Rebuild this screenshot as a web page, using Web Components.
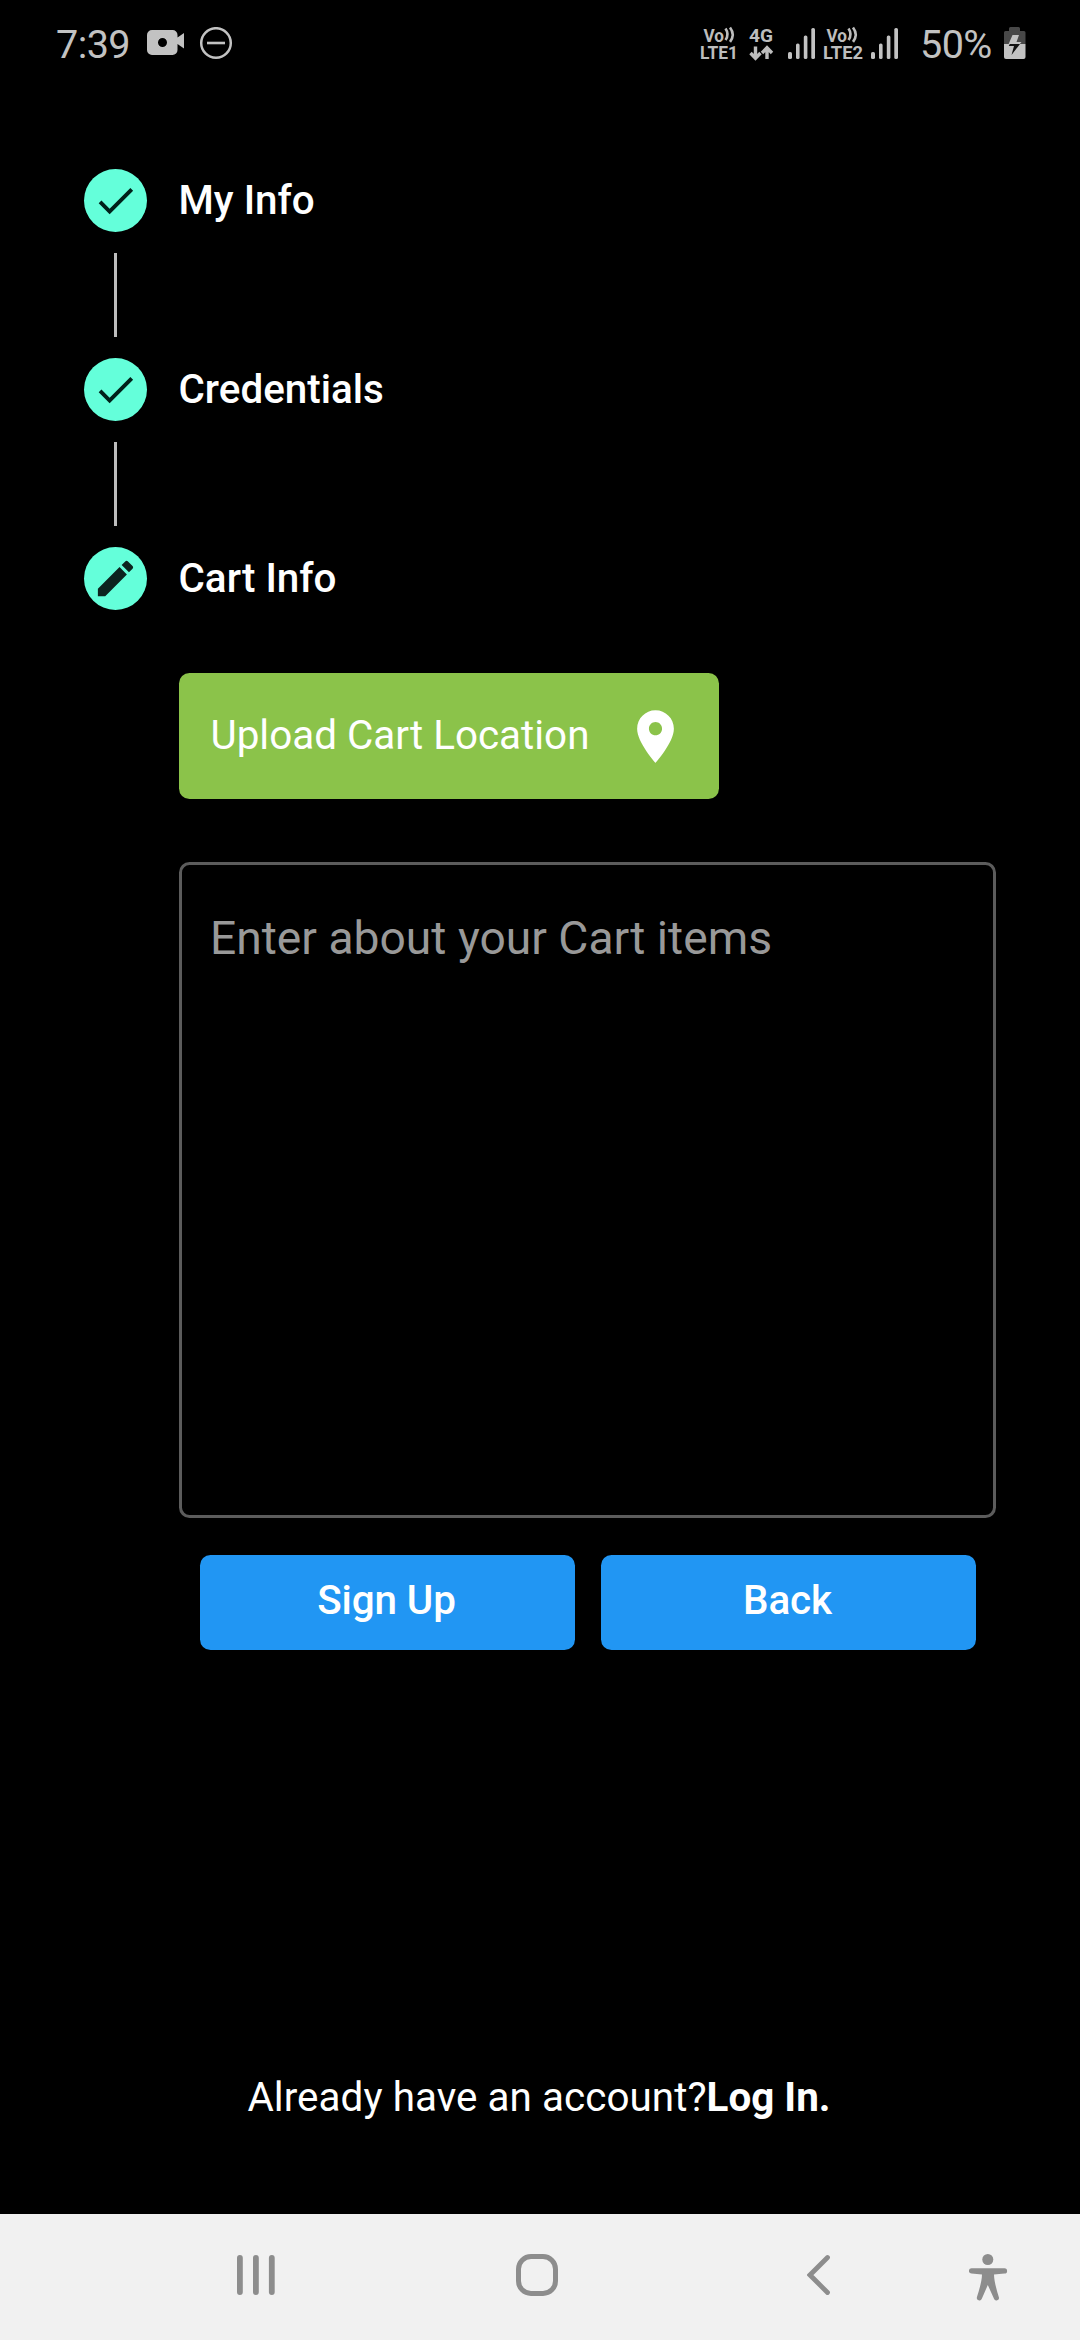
<!DOCTYPE html>
<html lang="en"><head><meta charset="utf-8"><title>Sign Up</title>
<style>
html,body{margin:0;background:#000}
body{font-family:Roboto,"Liberation Sans",sans-serif;color:#fff}
</style></head>
<body>
<signup-screen></signup-screen>
<script>
const define=(name,css,html,connect)=>customElements.define(name,class extends HTMLElement{
  constructor(){super();this.attachShadow({mode:'open'}).innerHTML=`<style>${css}</style>${html}`;}
  connectedCallback(){if(connect)connect(this);}
});

define('signal-bars',':host{display:block;width:27px;height:31px}svg{display:block}',
`<svg width="27" height="31" fill="#c2c2c2"><rect x="0" y="24" width="4" height="7" rx="1.6"/><rect x="8" y="15.5" width="3.6" height="15.5" rx="1.6"/><rect x="15.8" y="7.5" width="3.6" height="23.5" rx="1.6"/><rect x="23.3" y="0" width="3.7" height="31" rx="1.6"/></svg>`);

define('volte-badge',`:host{display:block;width:42px;height:34px}svg{display:block;overflow:visible}
text{font:700 18.5px Roboto,sans-serif;fill:#bdbdbd}`,
`<svg width="42" height="34"><text x="3.500" y="14.5" textLength="20.500" lengthAdjust="spacingAndGlyphs">Vo</text>
<path d="M25.500 1.500q4 5.800 0 11.600M30 .500q5.500 7.200 0 14.400" fill="none" stroke="#bdbdbd" stroke-width="2.600"/>
<text class="l" x="0" y="31.500" lengthAdjust="spacingAndGlyphs"></text></svg>`,
el=>{const t=el.shadowRoot.querySelector('.l');t.textContent=el.getAttribute('label');t.setAttribute('textLength',el.getAttribute('fit'));});

define('status-bar',`:host{display:flex;height:84px;box-sizing:border-box;padding:27px 54px 0 56px;align-items:flex-start;color:#c2c2c2}
.t{font-size:39.600px;letter-spacing:-.6px;line-height:34px;height:34px;margin-top:1px;white-space:nowrap}
svg{display:block;flex:none}.sp{flex:1}
text{font:700 19px Roboto,sans-serif;fill:#bdbdbd}`,
`<span class="t" style="width:91px">7:39</span>
<svg width="38" height="34"><path fill="#c2c2c2" fill-rule="evenodd" d="M5 3H25.500a5 5 0 0 1 5 5V10.500L37 6V21.500L30.500 17V23a5 5 0 0 1-5 5H5a5 5 0 0 1-5-5V8a5 5 0 0 1 5-5ZM15.500 11a4.500 4.500 0 1 0 0 9a4.500 4.500 0 1 0 0-9Z"/></svg>
<svg width="34" height="34" style="margin-left:14px"><circle cx="17" cy="16" r="14.800" fill="none" stroke="#c2c2c2" stroke-width="2.500"/><path d="M8 16H26" stroke="#c2c2c2" stroke-width="2.600"/></svg>
<span class="sp"></span>
<volte-badge label="LTE1" fit="38"></volte-badge>
<svg width="26" height="34" style="margin-left:7px;overflow:visible"><text x="0" y="14.500" textLength="24" lengthAdjust="spacingAndGlyphs">4G</text><path d="M6.500 19.500V30M1.500 26L6.500 31.200L11.500 26M18 32V22M13 26L18 20.800L23 26" fill="none" stroke="#bdbdbd" stroke-width="3.400"/></svg>
<signal-bars style="margin-left:13px;margin-top:1px"></signal-bars>
<volte-badge label="LTE2" fit="40" style="margin-left:8px"></volte-badge>
<signal-bars style="margin-left:6px;margin-top:1px"></signal-bars>
<span class="t" style="margin-left:22px;width:84px">50%</span>
<svg width="22" height="34"><path fill="#484848" d="M6.500 0H14.500a1.500 1.500 0 0 1 1.500 1.500V4H20a1.500 1.500 0 0 1 1.500 1.500V17H0V5.500A1.500 1.500 0 0 1 1.500 4H5V1.500A1.500 1.500 0 0 1 6.500 0Z"/><path fill="#c2c2c2" d="M0 17H21.500V30a2 2 0 0 1-2 2H2a2 2 0 0 1-2-2Z"/><path d="M8.500 8H15L12.500 15H17.500L7 28L9.500 18.500H4Z" fill="#c2c2c2"/><path d="M12.500 17H16L7.500 28L10 19H4.800L5.800 17Z" fill="#111"/></svg>`);

define('step-row',`:host{display:flex;align-items:center;height:63px;gap:31.500px}
.dot{width:63px;height:63px;border-radius:50%;background:#64ffda;display:flex;align-items:center;justify-content:center;flex:none}
.label{font-weight:500;font-size:40.400px;line-height:63px;white-space:nowrap}
svg{display:block}`,
`<span class="dot"><slot name="icon"></slot></span><span class="label"><slot></slot></span>`);

define('step-line',':host{display:block;width:2.625px;height:84px;margin:21px 0 21px 30.200px;background:#bdbdbd}','');

define('upload-button',`:host{display:flex;align-items:center;justify-content:space-between;box-sizing:border-box;width:540px;height:126px;padding:0 32px 0 31.500px;border-radius:10.500px;background:#8bc34a}
.l{font-size:40.400px;margin-top:-2px;white-space:nowrap}svg{display:block}`,
`<span class="l"><slot></slot></span><svg width="63" height="63" viewBox="0 0 24 24" fill="#fff"><path d="M12 2C8.130 2 5 5.130 5 9c0 5.250 7 13 7 13s7-7.750 7-13c0-3.870-3.130-7-7-7zm0 9.500c-1.380 0-2.500-1.120-2.500-2.500s1.120-2.500 2.500-2.500 2.500 1.120 2.500 2.500-1.120 2.500-2.500 2.500z"/></svg>`);

define('about-field',`:host{display:block;box-sizing:border-box;width:817px;height:656px;border:3px solid #5c5c5c;border-radius:10.500px;padding:43px 28px;color:#999}
.l{font-size:46.200px;line-height:60px;white-space:nowrap}`,`<span class="l"><slot></slot></span>`);

define('action-button',`:host{display:flex;align-items:center;justify-content:center;width:375px;height:94.500px;border-radius:10.500px;background:#2196f3}
.l{font-weight:500;font-size:40.400px;letter-spacing:-.1px;margin-top:-3px;margin-right:1px;white-space:nowrap}`,`<span class="l"><slot></slot></span>`);

define('login-prompt',`:host{display:flex;justify-content:center;padding-right:2px;font-size:40.400px;line-height:54px;white-space:nowrap}span{letter-spacing:.05px}b{font-weight:700}`,
`<span class="l">Already have an account?</span><b class="l">Log In.</b>`);

define('nav-bar',`:host{display:flex;height:126px;background:#f1f1f1;align-items:flex-start;box-sizing:border-box;padding:40px 72px 0 237px}svg{display:block;flex:none}`,
`<svg width="38" height="42" fill="#8d8d8d"><rect x="0" y="1" width="5.800" height="40" rx="2.900"/><rect x="16" y="1" width="5.800" height="40" rx="2.900"/><rect x="31.900" y="1" width="5.800" height="40" rx="2.900"/></svg>
<svg width="42" height="42" style="margin-left:241px"><rect x="2.500" y="2.500" width="37" height="37" rx="12.500" fill="none" stroke="#8d8d8d" stroke-width="5"/></svg>
<svg width="24" height="42" style="margin-left:249px"><path d="M20.500 3.500L3 21L20.500 38.500" fill="none" stroke="#8d8d8d" stroke-width="4.800" stroke-linecap="round"/></svg>
<svg width="39" height="48" style="margin-left:138px" fill="#8d8d8d"><circle cx="18.800" cy="5.500" r="5.500"/><path d="M2.500 14.300H35.500a2.600 2.600 0 0 1 0 5.200L25 20.500C25 27 28 37 29.800 43a2.500 2.500 0 0 1-4.800 1.700L18.800 31L12.800 44.700A2.500 2.500 0 0 1 8 43C9.800 37 13 27 13 20.500L2.500 19.500a2.600 2.600 0 0 1 0-5.200Z"/></svg>`);

const check='<svg slot="icon" width="47" height="47" viewBox="0 0 24 24" fill="#00211a"><path d="M9 16.170L4.830 12l-1.420 1.410L9 19 21 7l-1.410-1.410z"/></svg>';
const pencil='<svg slot="icon" width="47" height="47" viewBox="0 0 24 24" fill="#0c241f"><path d="M3 17.250V21h3.750L17.810 9.940l-3.750-3.750L3 17.250zM20.710 7.040c.390-.390.390-1.020 0-1.410l-2.340-2.340c-.390-.390-1.020-.390-1.410 0l-1.830 1.830 3.750 3.750 1.830-1.830z"/></svg>';
define('signup-screen',`:host{display:flex;flex-direction:column;width:1080px;height:2340px;background:#000;overflow:hidden}
.steps{padding:85px 84px 0;flex:1}
.content{padding:63px 0 0 95px;width:817px}
.row{display:flex;justify-content:center;gap:26px;padding-top:37px}
about-field{margin-top:63px}login-prompt{margin-bottom:89px}`,
`<status-bar></status-bar>
<div class="steps"><step-row>${check}My Info</step-row><step-line></step-line><step-row>${check}Credentials</step-row><step-line></step-line><step-row>${pencil}Cart Info</step-row>
<div class="content"><upload-button>Upload Cart Location</upload-button><about-field>Enter about your Cart items</about-field>
<div class="row"><action-button>Sign Up</action-button><action-button>Back</action-button></div></div></div>
<login-prompt></login-prompt><nav-bar></nav-bar>`);
</script>
</body></html>
